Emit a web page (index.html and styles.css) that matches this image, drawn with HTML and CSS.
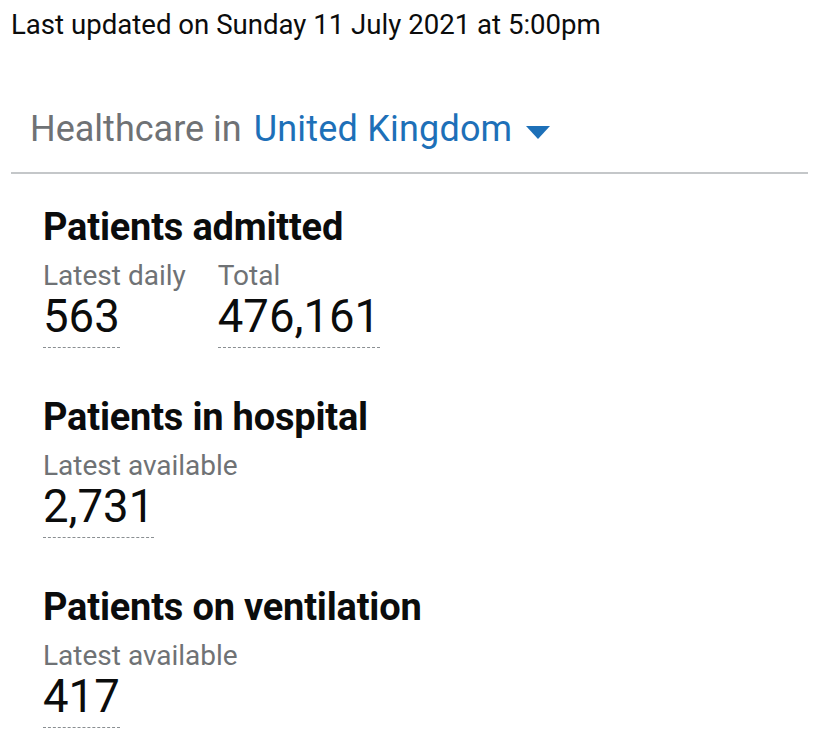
FILE: index.html
```html
<!DOCTYPE html>
<html>
<head>
<meta charset="utf-8">
<link rel="stylesheet" href="styles.css">
</head>
<body>
<div class="page">
  <p class="updated">Last updated on Sunday 11 July 2021 at 5:00pm</p>
  <div class="area">
    <span class="area-label">Healthcare in</span>
    <span class="area-link">United Kingdom <svg class="caret" width="24" height="14" viewBox="0 0 24 14"><path d="M0 1 L24 1 L12 14 Z" fill="#1d70b8"/></svg></span>
  </div>
  <div class="cards">
    <section class="card">
      <h2 class="card-title">Patients admitted</h2>
      <div class="metrics">
        <div class="metric">
          <div class="metric-label">Latest daily</div>
          <div class="metric-value">563</div>
        </div>
        <div class="metric">
          <div class="metric-label">Total</div>
          <div class="metric-value">476,161</div>
        </div>
      </div>
    </section>
    <section class="card">
      <h2 class="card-title">Patients in hospital</h2>
      <div class="metrics">
        <div class="metric">
          <div class="metric-label">Latest available</div>
          <div class="metric-value">2,731</div>
        </div>
      </div>
    </section>
    <section class="card">
      <h2 class="card-title">Patients on ventilation</h2>
      <div class="metrics">
        <div class="metric">
          <div class="metric-label">Latest available</div>
          <div class="metric-value">417</div>
        </div>
      </div>
    </section>
  </div>
</div>
</body>
</html>
```
FILE: styles.css
```css
html, body {
  margin: 0;
  padding: 0;
  background: #ffffff;
}
body {
  font-family: "Roboto", "Liberation Sans", sans-serif;
  color: #0b0c0c;
}
.page {
  padding: 0 11px;
}
.updated {
  margin: 0;
  padding-top: 8px;
  font-size: 27.6px;
  line-height: 34px;
}
.area {
  margin-top: 67px;
  padding: 0 0 23px 19px;
  border-bottom: 2px solid #c4c7c9;
  font-size: 36px;
  line-height: 40px;
  display: flex;
  align-items: center;
  gap: 12px;
}
.area-label {
  color: #6f7275;
}
.area-link {
  color: #1d70b8;
  display: inline-flex;
  align-items: center;
  gap: 14px;
  letter-spacing: 0.2px;
}
.caret {
  margin-top: 6px;
}
.cards {
  padding: 33px 0 0 32px;
  display: flex;
  flex-direction: column;
  gap: 49px;
}
.card-title {
  margin: 0;
  font-size: 38px;
  line-height: 40px;
  font-weight: 700;
  letter-spacing: -0.2px;
}
.metrics {
  display: flex;
  gap: 32px;
  margin-top: 12px;
}
.metric-label {
  color: #6f7275;
  font-size: 28px;
  line-height: 34px;
}
.metric-value {
  margin-top: -1px;
  font-size: 45.5px;
  line-height: 50px;
  padding-bottom: 5px;
  border-bottom: 1px dashed #8a8f92;
  display: inline-block;
}
```
